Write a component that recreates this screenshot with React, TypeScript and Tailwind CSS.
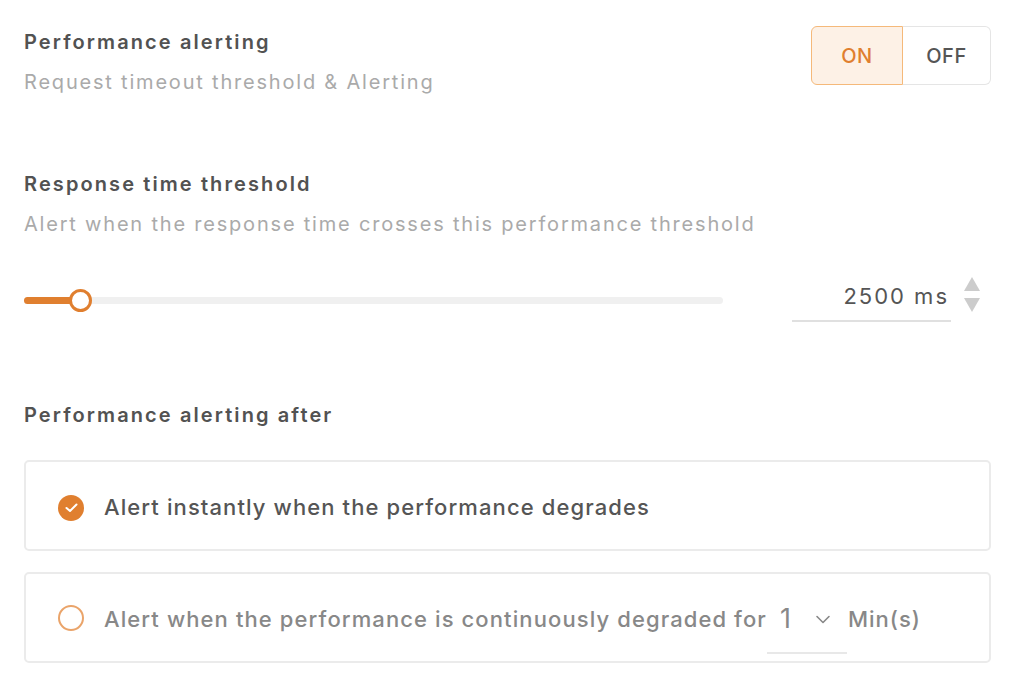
import { useState } from 'react'

const font = { fontFamily: 'Inter, "Noto Sans", sans-serif' }

function Radio({ checked }: { checked: boolean }) {
  if (checked) {
    return (
      <span className="w-[26px] h-[26px] shrink-0 rounded-full bg-[#e07f2f] flex items-center justify-center">
        <svg width="13" height="10" viewBox="0 0 13 10">
          <path d="M1.5 5 L5 8 L11.5 1.5" fill="none" stroke="white" strokeWidth="2" strokeLinecap="round" strokeLinejoin="round" />
        </svg>
      </span>
    )
  }
  return <span className="w-[26px] h-[26px] shrink-0 rounded-full border-2 border-[#eaa46a]" />
}

export default function App() {
  const [on, setOn] = useState(true)
  const [mode, setMode] = useState<'instant' | 'after'>('instant')

  return (
    <div className="w-[1016px] h-[684px] bg-white overflow-hidden pl-6 pr-[25px] pt-[26px]" style={font}>
      {/* header */}
      <div className="flex items-start justify-between">
        <div className="pt-[2px]">
          <h2 className="text-[20px] leading-[28px] font-semibold tracking-[2.1px] text-[#525252]">Performance alerting</h2>
          <p className="text-[20px] leading-[28px] mt-3 tracking-[1.8px] text-[#aaa]">Request timeout threshold &amp; Alerting</p>
        </div>
        <div className="flex h-[59px] text-[20px] font-medium tracking-[0.6px]">
          <button
            onClick={() => setOn(true)}
            className={`w-[92px] rounded-l-[6px] border ${on ? 'bg-[#fdf1e6] border-[#f5b97a] text-[#e07f2f]' : 'border-[#e5e5e5] border-r-0 text-[#555]'}`}>
            ON
          </button>
          <button
            onClick={() => setOn(false)}
            className={`w-[88px] rounded-r-[6px] border ${!on ? 'bg-[#fdf1e6] border-[#f5b97a] text-[#e07f2f]' : 'border-[#e5e5e5] border-l-0 text-[#555]'}`}>
            OFF
          </button>
        </div>
      </div>

      {/* threshold */}
      <div className="mt-[74px]">
        <h2 className="text-[20px] leading-[28px] font-semibold tracking-[2.1px] text-[#525252]">Response time threshold</h2>
        <p className="text-[20px] leading-[28px] mt-3 tracking-[1.8px] text-[#aaa]">Alert when the response time crosses this performance threshold</p>
      </div>
      <div className="flex items-center mt-[40px]">
        <div className="relative w-[699px] h-[7px] rounded-full bg-[#f0f0f0]">
          <div className="h-full w-[56px] rounded-full bg-[#e07f2f]" />
          <div className="absolute left-[45px] top-[-8px] w-[23px] h-[23px] rounded-full bg-white border-[3px] border-[#e07f2f]" />
        </div>
        <div className="ml-[69px] w-[159px] border-b-2 border-[#e0e0e0] h-[44px] pb-[6px] flex items-center justify-end pr-[2px] text-[22px] tracking-[2px] text-[#555]">
          2500 ms
        </div>
        <div className="ml-[13px] flex flex-col gap-[7px] -mt-[12px]">
          <svg width="16" height="14" viewBox="0 0 16 14"><path d="M8 0 L16 14 L0 14 Z" fill="#ccc" /></svg>
          <svg width="16" height="14" viewBox="0 0 16 14"><path d="M0 0 L16 0 L8 14 Z" fill="#ccc" /></svg>
        </div>
      </div>

      {/* alerting after */}
      <h2 className="mt-[79px] text-[20px] leading-[28px] font-semibold tracking-[2.1px] text-[#525252]">Performance alerting after</h2>
      <div className="mt-[31px] flex flex-col gap-[21px]">
        <button
          onClick={() => setMode('instant')}
          className="h-[91px] w-full border-2 border-[#ebebeb] rounded-[5px] flex items-center pl-[32px] pt-[4px] text-left">
          <Radio checked={mode === 'instant'} />
          <span className={`ml-[20px] text-[22px] font-medium tracking-[1.1px] ${mode === 'instant' ? 'text-[#555]' : 'text-[#888]'}`}>
            Alert instantly when the performance degrades
          </span>
        </button>
        <div
          onClick={() => setMode('after')}
          className="h-[91px] w-full border-2 border-[#ebebeb] rounded-[5px] flex items-center pl-[32px] cursor-pointer">
          <Radio checked={mode === 'after'} />
          <span className={`ml-[20px] pt-[4px] text-[22px] font-medium tracking-[1.1px] ${mode === 'after' ? 'text-[#555]' : 'text-[#888]'}`}>
            Alert when the performance is continuously degraded for
          </span>
          <div className="relative w-[80px] h-full flex items-center pt-[4px]">
            <span className="pl-[13px] text-[27px] text-[#888]">1</span>
            <svg className="ml-[24px]" width="16" height="9" viewBox="0 0 16 9">
              <path d="M2 1.5 L8 7.5 L14 1.5" fill="none" stroke="#888" strokeWidth="1.6" strokeLinecap="round" strokeLinejoin="round" />
            </svg>
            <div className="absolute left-0 right-0 bottom-[7px] h-[2px] bg-[#e8e8e8]" />
          </div>
          <span className="ml-[1px] pt-[4px] text-[22px] font-medium tracking-[1px] text-[#888]">Min(s)</span>
        </div>
      </div>
    </div>
  )
}
